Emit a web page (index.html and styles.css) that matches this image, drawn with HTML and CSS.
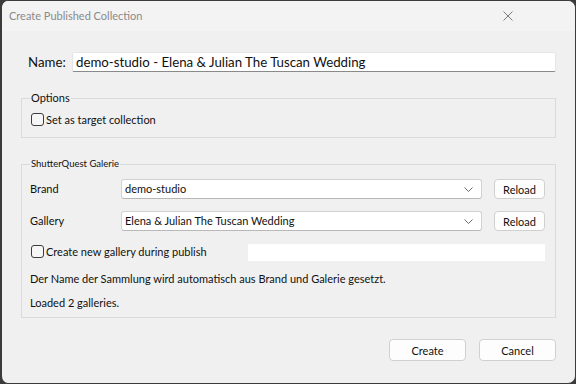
FILE: index.html
```html
<!DOCTYPE html>
<html lang="en">
<head>
    <meta charset="UTF-8">
    <meta name="viewport" content="width=device-width, initial-scale=1.0">
    <title>Create Published Collection</title>
    <link rel="stylesheet" href="styles.css">
</head>
<body>
    <div class="window">
        <div class="titlebar">
            <span class="title">Create Published Collection</span>
            <svg class="close" width="10" height="10" viewBox="0 0 10 10">
                <path d="M0.5 0.5 L9.5 9.5 M9.5 0.5 L0.5 9.5" stroke="#7a7a7a" stroke-width="1" fill="none"/>
            </svg>
        </div>

        <div class="content">
            <div class="name-row">
                <label class="name-label">Name:</label>
                <div class="name-input">demo-studio - Elena &amp; Julian The Tuscan Wedding</div>
            </div>

            <fieldset class="group options">
                <legend>Options</legend>
                <div class="check-row">
                    <span class="checkbox"></span>
                    <span>Set as target collection</span>
                </div>
            </fieldset>

            <fieldset class="group galerie">
                <legend class="small">ShutterQuest Galerie</legend>
                <div class="field-row">
                    <span class="field-label">Brand</span>
                    <div class="combo">
                        <span>demo-studio</span>
                        <svg class="chevron" width="9" height="5" viewBox="0 0 9 5"><path d="M0.5 0.5 L4.5 4.5 L8.5 0.5" stroke="#6b6b6b" fill="none"/></svg>
                    </div>
                    <button class="btn reload">Reload</button>
                </div>
                <div class="field-row">
                    <span class="field-label">Gallery</span>
                    <div class="combo">
                        <span>Elena &amp; Julian The Tuscan Wedding</span>
                        <svg class="chevron" width="9" height="5" viewBox="0 0 9 5"><path d="M0.5 0.5 L4.5 4.5 L8.5 0.5" stroke="#6b6b6b" fill="none"/></svg>
                    </div>
                    <button class="btn reload">Reload</button>
                </div>
                <div class="new-row">
                    <div class="check-row">
                        <span class="checkbox"></span>
                        <span>Create new gallery during publish</span>
                    </div>
                    <div class="new-input"></div>
                </div>
                <p class="note">Der Name der Sammlung wird automatisch aus Brand und Galerie gesetzt.</p>
                <p class="note status">Loaded 2 galleries.</p>
            </fieldset>

            <div class="actions">
                <button class="btn action">Create</button>
                <button class="btn action">Cancel</button>
            </div>
        </div>
    </div>
</body>
</html>
```

FILE: styles.css
```css
html,
body {
    margin: 0;
    padding: 0;
}

body {
    width: 576px;
    height: 384px;
    background: #3b3b3b;
    font: 11px Lato, 'Noto Sans', sans-serif;
    line-height: 16px;
    color: #111;
    overflow: hidden;
}

button {
    margin: 0;
    padding: 0;
    font-family: inherit;
    font-size: 11px;
    color: inherit;
    -webkit-appearance: none;
    appearance: none;
}

.window {
    box-sizing: border-box;
    width: 576px;
    height: 384px;
    border: 1px solid #3b3b3b;
    border-left-width: 2px;
    border-radius: 8px;
    background: #f0f0f0;
    overflow: hidden;
    display: flex;
    flex-direction: column;
}

.titlebar {
    height: 30px;
    flex: none;
    background: #f3f3f3;
    display: flex;
    align-items: center;
    padding: 0 7px;
    position: relative;
}

.title {
    color: #8a8a8a;
    font-size: 11px;
}

.close {
    position: absolute;
    right: 62px;
    top: 10px;
}

.content {
    flex: 1;
    padding: 21px 19px 0 19px;
    display: flex;
    flex-direction: column;
}

/* Name */
.name-row {
    display: flex;
    align-items: center;
    height: 20px;
    padding-left: 7px;
}

.name-label {
    font-size: 13.25px;
    width: 44px;
}

.name-input {
    flex: 1;
    box-sizing: border-box;
    height: 20px;
    background: #fff;
    border: 1px solid #e6e6e6;
    border-bottom-color: #8a8a8a;
    border-radius: 2px;
    font-size: 13.25px;
    line-height: 18px;
    padding-left: 3px;
}

/* Group boxes */
.group {
    margin: 0;
    border: 1px solid #dadada;
    padding: 0 10px 0 8px;
}

.group legend {
    padding: 0 1px;
    font-size: 11px;
    line-height: 16px;
}

.group legend.small {
    font-size: 9.5px;
}

.options {
    margin-top: 18px;
    padding-bottom: 10px;
}

.check-row {
    display: flex;
    align-items: center;
    gap: 2px;
    height: 15px;
    padding-left: 1px;
}

.options .check-row {
    margin-top: 6px;
}

.checkbox {
    box-sizing: border-box;
    width: 13px;
    height: 13px;
    border: 1px solid #3c3c3c;
    border-radius: 3px;
    background: #f6f6f6;
}

.galerie {
    margin-top: 18px;
    padding-bottom: 6px;
}

.field-row {
    display: flex;
    align-items: center;
    height: 20px;
    margin-top: 7px;
}

.field-row + .field-row {
    margin-top: 12px;
}

.field-label {
    width: 91px;
}

.combo {
    box-sizing: border-box;
    width: 361px;
    height: 20px;
    background: #fff;
    border: 1px solid #d2d2d2;
    border-bottom-color: #b8b8b8;
    border-radius: 3px;
    display: flex;
    align-items: center;
    justify-content: space-between;
    padding: 0 8px 0 3px;
}

.btn {
    box-sizing: border-box;
    background: #fdfdfd;
    border: 1px solid #d0d0d0;
    border-radius: 4px;
}

.reload {
    width: 51px;
    height: 20px;
    margin-left: 12px;
}

.new-row {
    display: flex;
    align-items: flex-start;
    justify-content: space-between;
    margin-top: 13px;
    height: 17px;
}

.new-input {
    width: 297px;
    height: 17px;
    background: #fff;
}

.note {
    margin: 10px 0 0 0;
    line-height: 16px;
}

.note.status {
    margin-top: 8px;
}

.actions {
    display: flex;
    justify-content: flex-end;
    gap: 13px;
    margin-top: 21px;
}

.action {
    width: 77px;
    height: 22px;
}
```
